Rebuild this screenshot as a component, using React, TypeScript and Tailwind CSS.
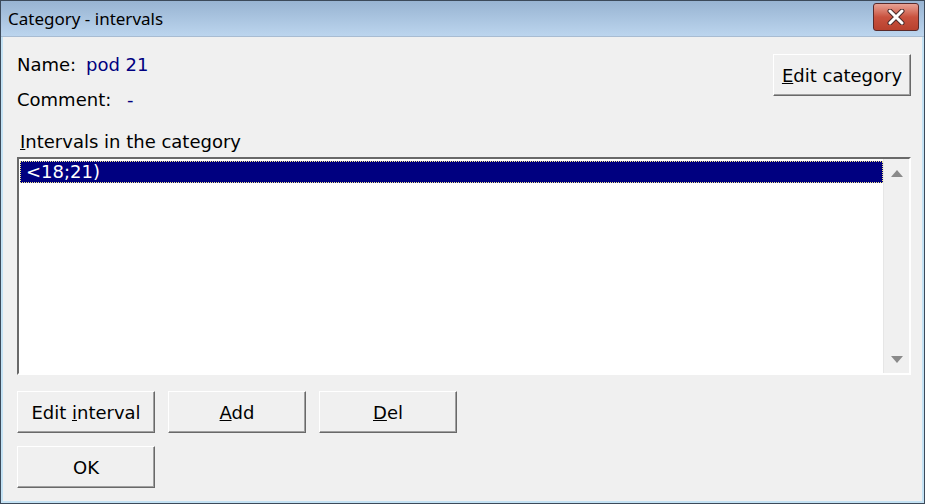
import React from "react";

const btn =
  "h-[42px] w-[138px] bg-[#f0f0f0] border border-t-white border-l-white border-r-[#696969] border-b-[#696969] shadow-[inset_-1px_-1px_0_#a0a0a0] text-[18px] text-black flex items-center justify-center";

export default function App() {
  return (
    <div
      className="w-[925px] h-[504px] bg-[#f0f0f0] flex flex-col border border-[#3c4a5a] overflow-hidden"
      style={{ fontFamily: "'DejaVu Sans', sans-serif" }}
    >
      {/* title bar */}
      <div className="h-[36px] shrink-0 flex items-center justify-between pl-[7px] pr-[5px] bg-gradient-to-b from-[#98b4d2] to-[#bcd5ee] border-b border-[#a8bcd2]">
        <span className="text-[17px] text-black" style={{ fontFamily: "'Noto Sans', sans-serif" }}>
          Category - intervals
        </span>
        <div className="w-[46px] h-[28px] -mt-[4px] rounded-[3px] border border-[#5a2a2a] bg-gradient-to-b from-[#e8a295] via-[#c9523f] to-[#b8412e] flex items-center justify-center">
          <svg width="18" height="16" viewBox="0 0 18 16">
            <path d="M3 2 L15 14 M15 2 L3 14" stroke="#4a2a2a" strokeWidth="5" strokeLinecap="round" />
            <path d="M3 2 L15 14 M15 2 L3 14" stroke="#ffffff" strokeWidth="3" strokeLinecap="round" />
          </svg>
        </div>
      </div>

      {/* client */}
      <div className="flex-1 flex flex-col border-l-[2px] border-r-[2px] border-b-[2px] border-[#c4e2f4] px-[14px]">
        <div className="flex justify-between pt-[17px]">
          <div className="flex flex-col text-[18px] leading-[20px]">
            <div className="flex pt-[1px]">
              <span className="w-[69px]">Name:</span>
              <span className="text-[#000080]">pod 21</span>
            </div>
            <div className="flex mt-[15px]">
              <span className="w-[110px]">Comment:</span>
              <span className="text-[#000080]">-</span>
            </div>
          </div>
          <button className={btn + " mr-[-3px]"}>
            <span>
              <u>E</u>dit category
            </span>
          </button>
        </div>

        <div className="mt-[22px] ml-[3px] text-[18px] leading-[20px]">
          <u>I</u>ntervals in the category
        </div>

        <div className="mt-[5px] h-[218px] w-[894px] border-[2px] border-t-[#696969] border-l-[#696969] border-b-white border-r-white flex bg-white">
          <div className="flex-1 pt-[2px] pl-[1px]">
            <div className="h-[22px] bg-[#000080] text-white text-[18px] leading-[21px] pl-[6px] outline-1 outline-dotted outline-[#f0e68c] -outline-offset-1">
              &lt;18;21)
            </div>
          </div>
          <div className="w-[26px] bg-[#f0f0f0] border-l border-[#e6e6e6] flex flex-col justify-between items-center pt-[11px] pb-[10px]">
            <svg width="12" height="7" viewBox="0 0 12 7">
              <path d="M6 0 L12 7 L0 7 Z" fill="#8a8a8a" />
            </svg>
            <svg width="12" height="7" viewBox="0 0 12 7">
              <path d="M0 0 L12 0 L6 7 Z" fill="#8a8a8a" />
            </svg>
          </div>
        </div>

        <div className="flex gap-[13px] mt-[16px]">
          <button className={btn + " border-r-[#303030] border-b-[#303030] shadow-[inset_-1px_-1px_0_#696969,0_0_0_1px_#696969]"}>
            <span>
              Edit <u>i</u>nterval
            </span>
          </button>
          <button className={btn}>
            <span>
              <u>A</u>dd
            </span>
          </button>
          <button className={btn}>
            <span>
              <u>D</u>el
            </span>
          </button>
        </div>

        <div className="mt-[13px]">
          <button className={btn}>OK</button>
        </div>
      </div>
    </div>
  );
}
